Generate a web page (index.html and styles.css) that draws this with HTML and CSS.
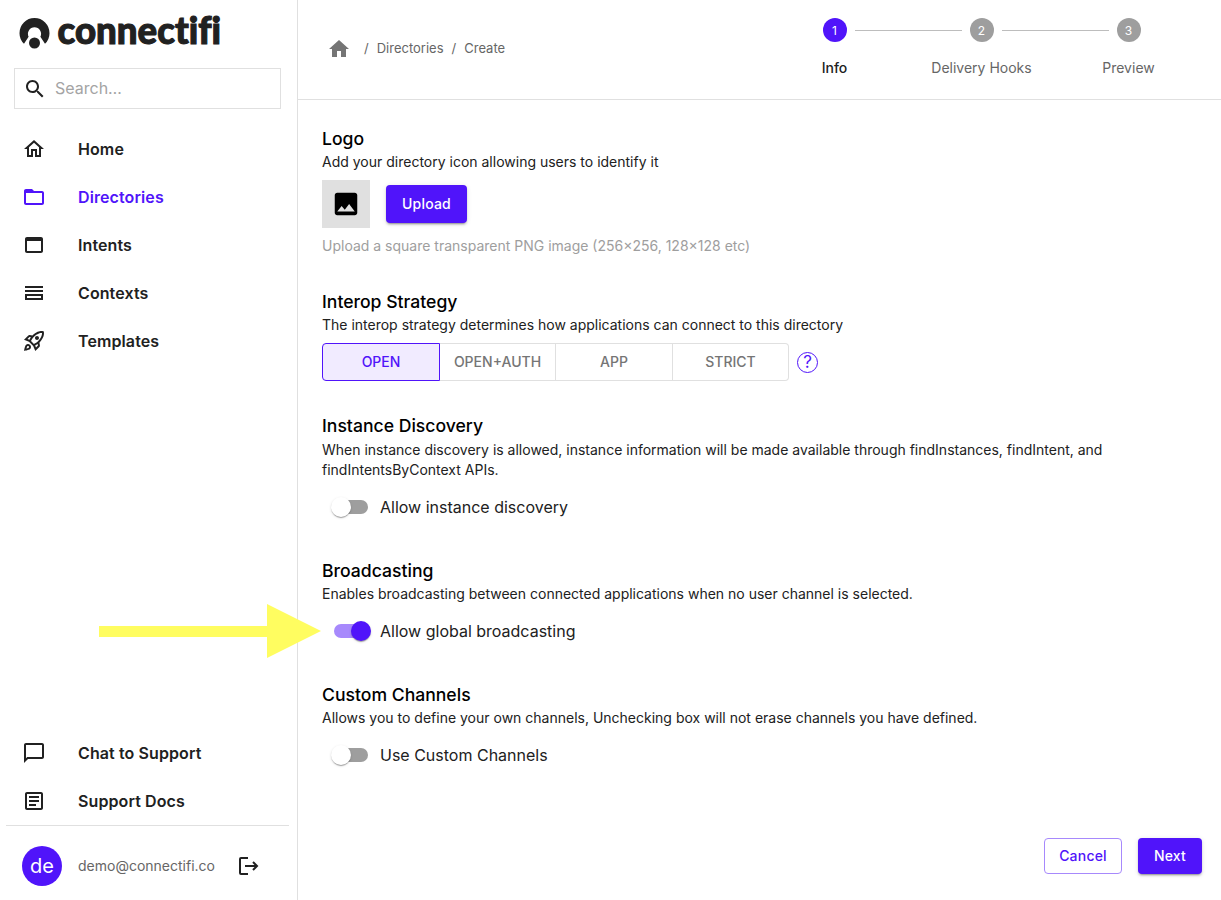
FILE: index.html
```html
<!DOCTYPE html>
<html lang="en">
<head>
<meta charset="utf-8">
<title>Connectifi – Create directory</title>
<link rel="stylesheet" href="styles.css">
</head>
<body>
<div class="app">
  <aside class="sidebar">
    <svg class="brand" width="240" height="60" viewBox="0 -9 240 60" role="img" aria-label="connectifi">
      <path d="M10 34.800A15 15 0 1 1 31 34.800L26.400 27.800A6.600 6.600 0 1 0 14.600 27.800Z" class="brand-ink"/>
      <circle cx="20.500" cy="34" r="7" fill="#fff"/>
      <circle cx="20.500" cy="34" r="5.500" class="brand-ink"/>
      <text x="43.5" y="34.5" textLength="163.5" lengthAdjust="spacingAndGlyphs" class="wordmark">connectifi</text>
    </svg>
    <label class="search">
      <svg class="icon" viewBox="0 0 24 24"><path d="M15.5 14h-.79l-.28-.27C15.41 12.59 16 11.11 16 9.5 16 5.91 13.09 3 9.5 3S3 5.91 3 9.5 5.91 16 9.5 16c1.61 0 3.09-.59 4.23-1.57l.27.28v.79l5 4.99L20.49 19l-4.99-5zm-6 0C7.01 14 5 11.99 5 9.5S7.01 5 9.5 5 14 7.01 14 9.5 11.99 14 9.5 14z"/></svg>
      <span>Search…</span>
    </label>
    <nav class="nav">
      <a class="nav-item"><svg class="icon" viewBox="0 0 24 24"><path d="m12 5.69 5 4.5V18h-2v-6H9v6H7v-7.81l5-4.5M12 3 2 12h3v8h6v-6h2v6h6v-8h3L12 3z"/></svg>Home</a>
      <a class="nav-item active"><svg class="icon" viewBox="0 0 24 24"><path d="M20 6h-8l-2-2H4c-1.100 0-1.990.9-1.990 2L2 18c0 1.100.9 2 2 2h16c1.100 0 2-.9 2-2V8c0-1.100-.9-2-2-2zm0 12H4V8h16v10z"/></svg>Directories</a>
      <a class="nav-item"><svg class="icon" viewBox="0 0 24 24"><path d="M19 4H5c-1.110 0-2 .9-2 2v12c0 1.100.89 2 2 2h14c1.100 0 2-.9 2-2V6c0-1.100-.89-2-2-2zm0 14H5V8h14v10z"/></svg>Intents</a>
      <a class="nav-item"><svg class="icon" viewBox="0 0 24 24"><path d="M19 15v2H5v-2h14m2-2H3v6h18v-6zM3 9h18v2H3zM3 5h18v2H3z"/></svg>Contexts</a>
      <a class="nav-item"><svg class="icon" viewBox="0 0 24 24"><path d="M6 15c-.83 0-1.580.34-2.120.88C2.700 17.060 2 22 2 22s4.940-.7 6.120-1.880C8.660 19.580 9 18.830 9 18c0-1.660-1.340-3-3-3zm.71 3.710c-.28.28-2.170.76-2.170.76s.47-1.880.76-2.170c.17-.19.42-.3.7-.3.55 0 1 .45 1 1 0 .28-.11.53-.29.71zm10.710-5.060c6.360-6.360 4.240-11.310 4.240-11.310S16.710.22 10.350 6.580l-2.490-.5c-.65-.13-1.330.08-1.810.55L2 10.690l5 2.140L11.170 17l2.140 5 4.050-4.050c.47-.47.68-1.150.55-1.810l-.49-2.490zM7.410 10.830l-1.910-.82 1.970-1.970 1.440.29c-.57.83-1.080 1.700-1.500 2.500zm6.580 7.670-.82-1.910c.8-.42 1.670-.93 2.490-1.500l.29 1.440-1.960 1.970zM16 12.240c-1.320 1.320-3.380 2.400-4.040 2.730l-2.930-2.930c.32-.65 1.400-2.710 2.730-4.040 4.680-4.680 8.230-3.990 8.230-3.990s.69 3.550-3.990 8.230zM15 11c1.100 0 2-.9 2-2s-.9-2-2-2-2 .9-2 2 .9 2 2 2z"/></svg>Templates</a>
    </nav>
    <nav class="nav nav-bottom">
      <a class="nav-item"><svg class="icon" viewBox="0 0 24 24"><path d="M4 4h16v12H5.170L4 17.170V4m0-2c-1.100 0-1.990.9-1.990 2L2 22l4-4h14c1.100 0 2-.9 2-2V4c0-1.100-.9-2-2-2H4z"/></svg>Chat to Support</a>
      <a class="nav-item"><svg class="icon" viewBox="0 0 24 24"><path d="M19 5v14H5V5h14m0-2H5c-1.100 0-2 .9-2 2v14c0 1.100.9 2 2 2h14c1.100 0 2-.9 2-2V5c0-1.100-.9-2-2-2zM14 17H7v-2h7v2zm3-4H7v-2h10v2zm0-4H7V7h10v2z"/></svg>Support Docs</a>
    </nav>
    <div class="account">
      <span class="avatar">de</span>
      <span class="email">demo@connectifi.co</span>
      <svg class="icon logout" viewBox="0 0 24 24"><path d="M12 4H5a1 1 0 0 0-1 1v14a1 1 0 0 0 1 1h7M9 12h12M17 8l4 4-4 4"/></svg>
    </div>
  </aside>
  <main class="main">
    <header class="topbar">
      <div class="crumbs">
        <svg class="icon" viewBox="0 0 24 24"><path d="M10 20v-6h4v6h5v-8h3L12 3 2 12h3v8z"/></svg>
        <span class="sep first">/</span><span>Directories</span><span class="sep">/</span><span>Create</span>
      </div>
      <div class="stepper">
        <div class="step current"><span class="dot">1</span><span>Info</span></div>
        <div class="step"><span class="dot">2</span><span>Delivery Hooks</span></div>
        <div class="step"><span class="dot">3</span><span>Preview</span></div>
      </div>
    </header>
    <div class="content">
      <section>
        <h2>Logo</h2>
        <p>Add your directory icon allowing users to identify it</p>
        <div class="upload-row">
          <div class="thumb"><svg viewBox="0 0 24 24" width="30" height="30"><path d="M21 19V5c0-1.100-.9-2-2-2H5c-1.100 0-2 .9-2 2v14c0 1.100.9 2 2 2h14c1.100 0 2-.9 2-2zM8.500 13.500l2.500 3.010L14.500 12l4.500 6H5l3.500-4.500z"/></svg></div>
          <button class="btn solid upload">Upload</button>
        </div>
        <p class="hint">Upload a square transparent PNG image (256×256, 128×128 etc)</p>
      </section>
      <section>
        <h2>Interop Strategy</h2>
        <p>The interop strategy determines how applications can connect to this directory</p>
        <div class="strategy">
          <div class="group"><button class="selected">OPEN</button><button>OPEN+AUTH</button><button>APP</button><button>STRICT</button></div>
          <span class="help">?</span>
        </div>
      </section>
      <section class="discovery">
        <h2>Instance Discovery</h2>
        <p>When instance discovery is allowed, instance information will be made available through findInstances, findIntent, and findIntentsByContext APIs.</p>
        <label class="toggle"><span class="switch"></span>Allow instance discovery</label>
      </section>
      <section>
        <h2>Broadcasting</h2>
        <p>Enables broadcasting between connected applications when no user channel is selected.</p>
        <label class="toggle"><span class="switch on"></span>Allow global broadcasting</label>
      </section>
      <section>
        <h2>Custom Channels</h2>
        <p>Allows you to define your own channels, Unchecking box will not erase channels you have defined.</p>
        <label class="toggle"><span class="switch"></span>Use Custom Channels</label>
      </section>
    </div>
    <footer class="actions"><button class="btn outline">Cancel</button><button class="btn solid next">Next</button></footer>
  </main>
  <svg class="arrow" width="223" height="54" viewBox="0 0 223 54"><path d="M0 22h168V0l54 27-54 27V33H0z"/></svg>
</div>
</body>
</html>
```
FILE: styles.css
```css
* { box-sizing: border-box; }
body { margin: 0; background: #fff; color: #212121; font-family: Inter, "Liberation Sans", sans-serif; }
button { font: inherit; margin: 0; }
h2, p { margin: 0; }
.app { position: relative; display: flex; height: 900px; overflow: hidden; }
.icon { width: 24px; height: 24px; fill: currentColor; flex: none; }

.sidebar { width: 298px; flex: none; border-right: 1px solid #e0e0e0; display: flex; flex-direction: column; }
.brand { margin-left: 14px; flex: none; overflow: visible; }
.brand-ink { fill: #212121; }
.wordmark { font-family: Lato, sans-serif; font-weight: 900; font-size: 38px; font-variant-ligatures: none; fill: #212121; stroke: #212121; stroke-width: 1.1px; }
.search { display: flex; align-items: center; gap: 8px; width: 267px; height: 41px; margin: 8px 0 0 14px; padding: 0 0 1px 8px; border: 1px solid #e0e0e0; color: #212121; font-size: 16px; }
.search .icon { margin-top: 1px; }
.search span { color: #a4a4a4; }
.nav { display: flex; flex-direction: column; margin-top: 16px; }
.nav-item { display: flex; align-items: center; gap: 32px; height: 48px; padding-left: 22px; font-size: 16px; font-weight: 600; letter-spacing: .1px; }
.active { color: #5014fa; }
.nav-bottom { margin-top: auto; }
.account { display: flex; align-items: center; height: 75px; margin: 0 8px 0 6px; padding: 6px 0 0 16px; border-top: 1px solid #e0e0e0; }
.avatar { display: grid; place-items: center; width: 40px; height: 40px; border-radius: 50%; background: #5014fa; color: #fff; font-size: 20px; }
.email { width: 137px; margin: 0 21px 2px 16px; font-size: 14px; color: #666; }
.logout { fill: none; stroke: #212121; stroke-width: 2; }

.main { flex: 1; display: flex; flex-direction: column; }
.topbar { display: flex; justify-content: space-between; height: 100px; border-bottom: 1px solid #e0e0e0; color: #666; font-size: 14px; }
.crumbs { display: flex; align-items: center; height: 96px; padding-left: 29px; font-size: 13px; }
.crumbs .icon { color: #757575; margin-top: 1px; }
.sep { margin: 0 8px; }
.sep.first { margin-left: 13px; }
.stepper { display: flex; margin-right: 19px; padding-top: 18px; }
.step { position: relative; display: flex; flex-direction: column; align-items: center; gap: 16px; width: 147px; line-height: 20px; }
.step + .step::before { content: ""; position: absolute; top: 12px; left: -53.5px; width: 107px; border-top: 1px solid #bdbdbd; }
.dot { width: 24px; height: 24px; border-radius: 50%; background: #9e9e9e; color: #fff; font-size: 12px; line-height: 25px; text-align: center; }
.current { color: #212121; font-weight: 500; }
.current .dot { background: #5014fa; font-weight: 400; }

.content { display: flex; flex-direction: column; gap: 31.5px; width: 840px; padding: 25px 0 0 24px; }
h2 { color: #000; font-size: 17.6px; line-height: 27px; font-weight: 500; }
p { font-size: 14px; line-height: 20px; }
.hint { color: #9e9e9e; margin-top: 8px; }
.upload-row { display: flex; align-items: center; gap: 16px; margin-top: 8px; }
.thumb { display: grid; place-items: center; width: 48px; height: 48px; background: #e0e0e0; }
.btn { height: 36px; border: 0; border-radius: 4px; padding: 0 16px; font-size: 14px; font-weight: 500; letter-spacing: .2px; }
.solid { background: #5014fa; color: #fff; box-shadow: 0 3px 1px -2px rgba(0,0,0,.2), 0 2px 2px rgba(0,0,0,.14), 0 1px 5px rgba(0,0,0,.12); }
.upload { width: 81px; height: 38px; padding-bottom: 1px; }
.next { width: 64px; padding: 0; }
.strategy { display: flex; align-items: center; gap: 8px; margin-top: 8px; }
.group { display: grid; grid-template-columns: 118px 116px 117px 116px; height: 38px; }
.group button { padding: 0 0 1px; border: 1px solid #e0e0e0; border-left: 0; background: #fff; color: #757575; font-size: 14px; font-weight: 500; letter-spacing: 0; }
.group button:last-child { border-radius: 0 4px 4px 0; }
.group .selected { border: 1px solid #5014fa; border-radius: 4px 0 0 4px; background: #f1ebff; color: #5014fa; }
.help { width: 21px; height: 21px; margin-top: 1px; border: 1.5px solid #5014fa; border-radius: 50%; color: #5014fa; font-size: 17px; line-height: 19px; text-align: center; }
.discovery h2 { line-height: 27.5px; }
.toggle { display: flex; align-items: center; gap: 12px; height: 38px; margin-top: 8px; padding-left: 12px; font-size: 16px; }
.switch { position: relative; width: 34px; height: 14px; border-radius: 7px; background: #9e9e9e; }
.switch::after { content: ""; position: absolute; top: -3px; left: -3px; width: 20px; height: 20px; border-radius: 50%; background: #fff; box-shadow: 0 2px 1px -1px rgba(0,0,0,.2), 0 1px 1px rgba(0,0,0,.14), 0 1px 3px rgba(0,0,0,.12); }
.switch.on { background: #a789fc; }
.switch.on::after { left: 17px; background: #5014fa; }
.discovery + section + section { margin-top: -.5px; }
.actions { display: flex; justify-content: flex-end; gap: 16px; margin-top: auto; padding: 0 19px 26px 0; }
.actions .btn { padding-bottom: 1px; }
.outline { width: 78px; padding: 0; border: 1px solid #a789fc; background: #fff; color: #5014fa; }

.arrow { position: absolute; left: 99px; top: 604px; fill: #fffd60; }
```
